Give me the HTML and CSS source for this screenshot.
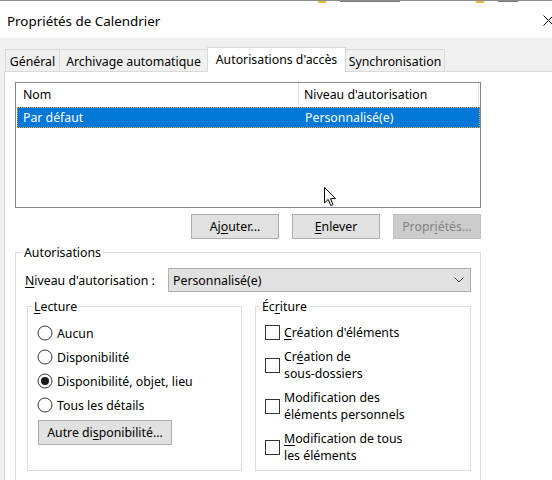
FILE: index.html
```html
<!DOCTYPE html>
<html lang="fr">
<head>
<meta charset="utf-8">
<title>Propriétés de Calendrier</title>
<link rel="stylesheet" href="styles.css">
</head>
<body>
<div class="desk"><span class="dico d1"></span><span class="dtext t1"></span><span class="dico d2"></span><span class="dtext t2"></span></div>
<div class="titlebar">
  <span class="title">Propriétés de Calendrier</span>
  <svg class="close" width="11" height="11" viewBox="0 0 11 11"><path d="M0.5 0.5 L10.5 10.5 M10.5 0.5 L0.5 10.5" stroke="#000" stroke-width="1" fill="none"/></svg>
</div>
<div class="client">
  <div class="tabs">
    <div class="tab tab-gen">Général</div>
    <div class="tab tab-arc">Archivage automatique</div>
    <div class="tab tab-aut active">Autorisations d'accès</div>
    <div class="tab tab-syn">Synchronisation</div>
  </div>
  <div class="panel">
    <div class="list">
      <div class="lhead"><div class="c1">Nom</div><div class="c2">Niveau d'autorisation</div></div>
      <div class="lrow"><div class="c1">Par défaut</div><div class="c2">Personnalisé(e)</div></div>
    </div>
    <div class="btnrow">
      <button class="btn">Aj<u>o</u>uter...</button>
      <button class="btn"><u>E</u>nlever</button>
      <button class="btn disabled">Propr<u>i</u>étés...</button>
    </div>
    <fieldset class="grp main">
      <legend>Autorisations</legend>
      <div class="levelrow">
        <span class="lbl"><u>N</u>iveau d'autorisation :</span>
        <div class="combo"><span>Personnalisé(e)</span>
          <svg class="chev" width="10" height="6" viewBox="0 0 10 6"><path d="M0.5 0.5 L5 5 L9.5 0.5" stroke="#444" stroke-width="1" fill="none"/></svg>
        </div>
      </div>
      <div class="subgrid">
        <fieldset class="grp sub">
          <legend><u>L</u>ecture</legend>
          <div class="radio"><svg class="rb" width="16" height="16" viewBox="0 0 16 16"><circle cx="8" cy="8" r="7" fill="#fff" stroke="#333" stroke-width="1"/></svg><span>Aucun</span></div>
          <div class="radio"><svg class="rb" width="16" height="16" viewBox="0 0 16 16"><circle cx="8" cy="8" r="7" fill="#fff" stroke="#333" stroke-width="1"/></svg><span>Disponibilité</span></div>
          <div class="radio"><svg class="rb" width="16" height="16" viewBox="0 0 16 16"><circle cx="8" cy="8" r="7" fill="#fff" stroke="#333" stroke-width="1"/><circle cx="8" cy="8" r="4" fill="#1a1a1a"/></svg><span>Disponibilité, objet, lieu</span></div>
          <div class="radio"><svg class="rb" width="16" height="16" viewBox="0 0 16 16"><circle cx="8" cy="8" r="7" fill="#fff" stroke="#333" stroke-width="1"/></svg><span>Tous les détails</span></div>
          <button class="btn wide">Autre di<u>s</u>ponibilité...</button>
        </fieldset>
        <fieldset class="grp sub">
          <legend>Éc<u>r</u>iture</legend>
          <div class="check"><span class="cb"></span><span><u>C</u>réation d'éléments</span></div>
          <div class="check"><span class="cb"></span><span>Cr<u>é</u>ation de<br>sous-dossiers</span></div>
          <div class="check"><span class="cb"></span><span>Modif<u>i</u>cation des<br>éléments personnels</span></div>
          <div class="check"><span class="cb"></span><span><u>M</u>odification de tous<br>les éléments</span></div>
        </fieldset>
      </div>
    </fieldset>
  </div>
</div>
<svg class="cursor" width="13" height="20" viewBox="0 0 13 20"><path d="M0.5 0.5 L0.5 16 L4.2 12.4 L6.8 18.5 L9 17.6 L6.5 11.6 L11.5 11.6 Z" fill="#fff" stroke="#000" stroke-width="1" stroke-linejoin="miter"/></svg>
</body>
</html>
```
FILE: styles.css
```css
html, body {
  margin: 0;
  padding: 0;
  background: #f0f0f0;
  overflow: hidden;
  width: 552px;
  height: 480px;
}
body {
  font-family: "Noto Sans", "Open Sans", sans-serif;
  font-size: 12.3px;
  color: #000;
  position: relative;
}
u { text-decoration: underline; text-underline-offset: 2px; }

.desk {
  height: 3px;
  background: #ffffff;
  border-top: 1px solid #8c8c8c;
  box-sizing: border-box;
  display: flex;
}
.dico { display: block; height: 2px; background: #e8b830; width: 8px; }
.d1 { margin-left: 318px; }
.dtext { display: block; height: 1px; background: #7a7a7a; margin-left: 14px; }
.t1 { width: 60px; }
.d2 { margin-left: 76px; }
.t2 { width: 20px; }

.titlebar {
  height: 35px;
  background: #fff;
  display: flex;
  align-items: center;
  justify-content: space-between;
  padding-left: 7px;
}
.title {
  font-size: 13.4px;
}
.close { margin-right: -2px; }

.client {
  padding-top: 9px;
}
.tabs {
  display: flex;
  align-items: flex-end;
  height: 24px;
  padding-left: 5px;
  position: relative;
  z-index: 1;
}
.tab {
  height: 22px;
  box-sizing: border-box;
  border: 1px solid #d9d9d9;
  border-bottom: none;
  margin-right: -1px;
  padding: 2px 0 0;
  display: flex;
  align-items: center;
  justify-content: center;
  background: #f0f0f0;
  white-space: nowrap;
}
.tab-gen { width: 55px; }
.tab-arc { width: 149px; }
.tab-aut { width: 139px; }
.tab-syn { width: 100px; }
.tab.active {
  height: 25px;
  margin-bottom: -1px;
  background: #fff;
  padding: 0 0 1px;
  position: relative;
  z-index: 2;
}

.panel {
  background: #fff;
  border-top: 1px solid #d9d9d9;
  border-left: 1px solid #d9d9d9;
  margin-left: 4px;
  padding: 10px 0 0 10px;
  height: 420px;
}

.list {
  width: 466px;
  height: 126px;
  box-sizing: border-box;
  border: 1px solid #828790;
}
.lhead {
  display: grid;
  grid-template-columns: 283px 1fr;
  height: 23px;
}
.lhead .c1 {
  padding-left: 7px;
  border-right: 1px solid #e5e5e5;
  display: flex;
  align-items: center;
}
.lhead .c2 {
  padding-left: 5px;
  border-right: 1px solid #e5e5e5;
  margin-right: 1px;
  display: flex;
  align-items: center;
}
.lrow {
  margin: 1px 0 0 1px;
  width: 463px;
  height: 21px;
  box-sizing: border-box;
  border: 1px dotted #f0a030;
  background: #0078d7;
  color: #fff;
  display: grid;
  grid-template-columns: 282px 1fr;
  align-items: center;
}
.lrow .c1 { padding-left: 5px; }
.lrow .c2 { padding-left: 5px; }

.btnrow {
  width: 466px;
  display: flex;
  justify-content: flex-end;
  gap: 13px;
  margin-top: 6px;
}
.btn {
  width: 88px;
  height: 25px;
  box-sizing: border-box;
  border: 1px solid #adadad;
  background: #e1e1e1;
  font: inherit;
  color: #000;
  padding: 0;
  margin: 0;
}
.btn.disabled {
  background: #cccccc;
  border-color: #bfbfbf;
  color: #838383;
}

.grp {
  border: 1px solid #dcdcdc;
  margin: 0;
  box-sizing: border-box;
}
.grp legend {
  padding: 0 2px;
  line-height: 17px;
}
.main {
  width: 466px;
  margin-top: 5px;
  padding: 0 9px 40px 9px;
}
.main > legend { margin-left: -3px; }

.levelrow {
  display: flex;
  align-items: center;
  height: 24px;
  margin-top: 7px;
}
.lbl { flex: 1; }
.combo {
  width: 303px;
  height: 24px;
  box-sizing: border-box;
  border: 1px solid #adadad;
  background: #e1e1e1;
  display: flex;
  align-items: center;
  justify-content: space-between;
  padding: 0 6px 0 4px;
}

.subgrid {
  display: grid;
  grid-template-columns: 215px 216px;
  column-gap: 13px;
  margin-left: 2px;
  margin-top: 6px;
}
.sub {
  height: 173px;
  padding: 0 6px 0 9px;
}
.sub > legend { margin-left: -5px; }

.radio {
  display: flex;
  align-items: center;
  gap: 4px;
  height: 24px;
}
.radio:first-of-type { margin-top: 6px; }
.rb { display: block; }
.btn.wide {
  width: 134px;
  margin: 3px 0 0 1px;
}

.check {
  display: flex;
  align-items: center;
  gap: 4px;
  line-height: 17px;
  margin-bottom: 7px;
}
.check:first-of-type { margin-top: 9px; }
.cb {
  width: 15px;
  height: 15px;
  box-sizing: border-box;
  border: 1px solid #333;
  background: #fff;
  flex: none;
}

.cursor {
  position: absolute;
  left: 324px;
  top: 187px;
}
```
